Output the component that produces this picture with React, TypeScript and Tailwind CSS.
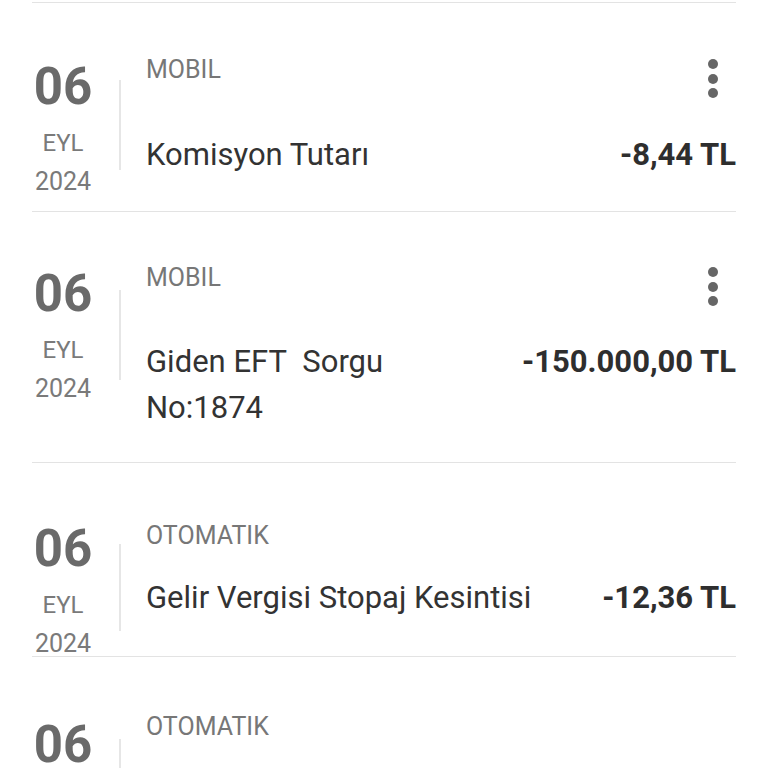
import { ReactNode } from 'react';

interface Txn {
  channel: string;
  title?: ReactNode;
  amount?: string;
  menu: boolean;
  row: string; // row padding
  date: string; // date column offset
  gap: string; // label -> title gap
  line: string; // vertical rule offset + height
}

const rows: Txn[] = [
  {
    channel: 'MOBIL',
    title: 'Komisyon Tutarı',
    amount: '-8,44 TL',
    menu: true,
    row: 'pt-[54px] pb-[17px]',
    date: 'mt-[4px]',
    gap: 'mt-[50px]',
    line: 'mt-[23px] h-[90px]',
  },
  {
    channel: 'MOBIL',
    title: (
      <>
        Giden EFT&nbsp; Sorgu
        <br />
        No:1874
      </>
    ),
    amount: '-150.000,00 TL',
    menu: true,
    row: 'pt-[53px] pb-[31px]',
    date: 'mt-[3px]',
    gap: 'mt-[49px]',
    line: 'mt-[25px] h-[90px]',
  },
  {
    channel: 'OTOMATIK',
    title: 'Gelir Vergisi Stopaj Kesintisi',
    amount: '-12,36 TL',
    menu: false,
    row: 'pt-[60px] pb-0',
    date: 'mt-0',
    gap: 'mt-[27px]',
    line: 'mt-[21px] h-[87px]',
  },
  {
    channel: 'OTOMATIK',
    menu: false,
    row: 'pt-[57px] pb-0',
    date: 'mt-[5px]',
    gap: 'mt-[27px]',
    line: 'mt-[25px] h-[90px]',
  },
];

function Kebab() {
  // keep the label row at the label's height; dots hang below it
  return (
    <div className="mr-[18px] h-[25px]">
      <div className="mt-[2px] flex flex-col items-center gap-[4.5px]">
        <span className="h-[10px] w-[10px] rounded-full bg-[#666]" />
        <span className="h-[10px] w-[10px] rounded-full bg-[#666]" />
        <span className="h-[10px] w-[10px] rounded-full bg-[#666]" />
      </div>
    </div>
  );
}

function Row({ t }: { t: Txn }) {
  return (
    <div className={`flex items-start border-t border-[#e3e3e3] ${t.row}`}>
      <div className={`flex w-[62px] flex-col items-center ${t.date}`}>
        <span className="text-[51px] font-bold leading-[51px] text-[#6a6a6a]">06</span>
        <span className="mt-[19px] text-[24px] leading-[24px] text-[#7a7a7a]">EYL</span>
        <span className="mt-[14px] text-[25px] leading-[25px] text-[#7a7a7a]">2024</span>
      </div>
      <div className={`ml-[25px] w-[2px] bg-[#e6e6e6] ${t.line}`} />
      <div className="ml-[25px] flex flex-1 flex-col">
        <div className="flex h-[25px] items-start justify-between">
          <span className="text-[25px] leading-[25px] text-[#777]">{t.channel}</span>
          {t.menu && <Kebab />}
        </div>
        {t.amount && (
          <div className={`flex items-baseline justify-between ${t.gap}`}>
            <span className="text-[31px] leading-[46px] text-[#333]">{t.title}</span>
            <span className="text-[31px] font-bold leading-[46px] text-[#2e2e2e]">{t.amount}</span>
          </div>
        )}
      </div>
    </div>
  );
}

export default function App() {
  return (
    <div className="h-[768px] w-[768px] overflow-hidden bg-white px-[32px] pt-[2px] font-['Roboto',sans-serif]">
      {rows.map((t, i) => (
        <Row key={i} t={t} />
      ))}
    </div>
  );
}
